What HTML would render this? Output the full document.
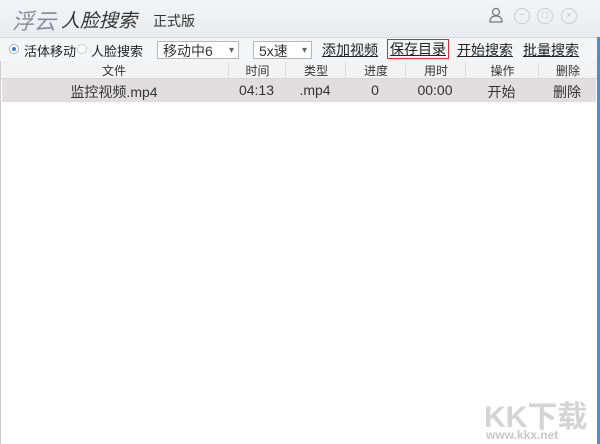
<!DOCTYPE html>
<html><head><meta charset="utf-8"><style>
body{margin:0;width:600px;height:444px;overflow:hidden;background:#fff;font-family:"Liberation Sans","Noto Sans CJK SC",sans-serif;position:relative}
.t{position:absolute;white-space:nowrap}
.top{position:absolute;left:0;top:0;width:600px;height:37px;background:linear-gradient(#f3f4f6,#e9ecf0)}
.tb{position:absolute;left:0;top:37px;width:600px;height:24px;background:#f4f5f7;border-top:1px solid #d8dce2}
.hd{position:absolute;left:0;top:61px;width:597px;height:17px;background:#f3f3f3;border-bottom:1px solid #d5d5d5}
.row{position:absolute;left:2px;top:79px;width:594px;height:23px;background:#e2dedf}
.c{position:absolute;text-align:center;font-size:12px;color:#333}
.sel{position:absolute;height:18px;border:1px solid #b8b8b8;background:#fff;font-size:14px;color:#333;line-height:18px;padding-left:5px;box-sizing:border-box}
.sel:after{content:"▾";position:absolute;right:4px;top:0;font-size:10px;color:#666}
.lk{position:absolute;font-size:14px;color:#222;text-decoration:underline;top:40px}
.ci{position:absolute;top:8px;width:16px;height:16px;border:1px solid #c9ccd2;border-radius:50%;box-sizing:border-box;color:#c5c8ce;font-size:10px;text-align:center;line-height:14px}
</style></head><body>
<div class="top"></div>
<div class="t" style="left:12px;top:4px;font-size:22px;font-style:italic;color:#8a9099">浮云</div>
<div class="t" style="left:61px;top:6px;font-size:19px;font-style:italic;color:#333">人脸搜索</div>
<div class="t" style="left:153px;top:11px;font-size:14px;color:#333">正式版</div>
<svg style="position:absolute;left:489px;top:7px" width="14" height="16" viewBox="0 0 14 16"><circle cx="7" cy="5" r="3.5" fill="none" stroke="#777" stroke-width="1.2"/><path d="M1 15 Q1 9 7 9 Q13 9 13 15 Z" fill="none" stroke="#777" stroke-width="1.2"/></svg>
<div class="ci" style="left:514px">−</div>
<div class="ci" style="left:537px">□</div>
<div class="ci" style="left:561px">×</div>
<div class="tb"></div>
<div style="position:absolute;left:9px;top:44px;width:8px;height:8px;border-radius:50%;background:#fff;border:1px solid #aac"><div style="margin:2px;width:4px;height:4px;border-radius:50%;background:#3c7fd0"></div></div>
<div class="t" style="left:24px;top:41px;font-size:13px;color:#222">活体移动</div>
<div style="position:absolute;left:77px;top:44px;width:8px;height:8px;border-radius:50%;background:#fff;border:1px solid #ccc"></div>
<div class="t" style="left:91px;top:41px;font-size:13px;color:#222">人脸搜索</div>
<div class="sel" style="left:157px;top:41px;width:82px">移动中6</div>
<div class="sel" style="left:253px;top:41px;width:59px">5x速</div>
<div class="lk" style="left:322px">添加视频</div>
<div class="lk" style="left:387px;top:39px;border:1px solid #d43030;padding:0 2px;height:18px;line-height:19px">保存目录</div>
<div class="lk" style="left:457px">开始搜索</div>
<div class="lk" style="left:523px">批量搜索</div>
<div class="hd"></div>
<div class="row"></div>
<div style="position:absolute;left:597px;top:37px;width:3px;height:407px;background:#4a90d0"></div>
<div style="position:absolute;left:0;top:61px;width:1px;height:383px;background:#ccc"></div>
<div class="c" style="left:0;width:228px;top:62px">文件</div>
<div class="c" style="left:228px;width:57px;top:62px;border-left:1px solid #ddd">时间</div>
<div class="c" style="left:285px;width:60px;top:62px;border-left:1px solid #ddd">类型</div>
<div class="c" style="left:345px;width:60px;top:62px;border-left:1px solid #ddd">进度</div>
<div class="c" style="left:405px;width:60px;top:62px;border-left:1px solid #ddd">用时</div>
<div class="c" style="left:465px;width:73px;top:62px;border-left:1px solid #ddd">操作</div>
<div class="c" style="left:538px;width:58px;top:62px;border-left:1px solid #ddd">删除</div>
<div class="c" style="left:0;width:228px;top:82px;font-size:14px">监控视频.mp4</div>
<div class="c" style="left:228px;width:57px;top:82px;font-size:14px">04:13</div>
<div class="c" style="left:285px;width:60px;top:82px;font-size:14px">.mp4</div>
<div class="c" style="left:345px;width:60px;top:82px;font-size:14px">0</div>
<div class="c" style="left:405px;width:60px;top:82px;font-size:14px">00:00</div>
<div class="c" style="left:465px;width:73px;top:82px;font-size:14px">开始</div>
<div class="c" style="left:538px;width:58px;top:82px;font-size:14px">删除</div>
<div class="t" style="left:484px;top:392px;font-size:30px;font-weight:bold;color:#d4d4d4">KK下载</div>
<div class="t" style="left:486px;top:428px;font-size:12px;font-weight:bold;color:#c8c8c8">www.kkx.net</div>
</body></html>
